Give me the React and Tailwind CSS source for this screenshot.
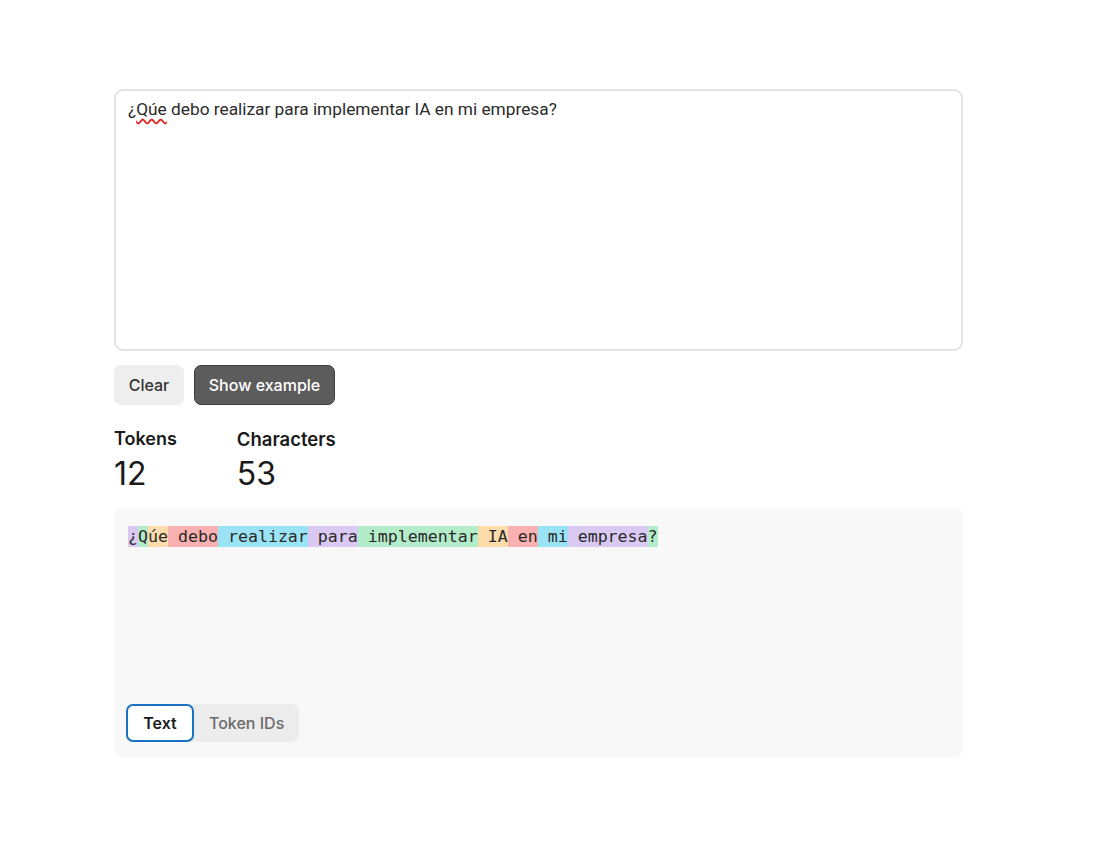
export default function App() {
  const tokens = [
    { t: "¿", c: "bg-[#d9c9f3]" },
    { t: "Q", c: "bg-[#b3ecc8]" },
    { t: "úe", c: "bg-[#fcdcab]" },
    { t: " debo", c: "bg-[#f9b1b1]" },
    { t: " realizar", c: "bg-[#9ae3f4]" },
    { t: " para", c: "bg-[#d9c9f3]" },
    { t: " implementar", c: "bg-[#b3ecc8]" },
    { t: " IA", c: "bg-[#fcdcab]" },
    { t: " en", c: "bg-[#f9b1b1]" },
    { t: " mi", c: "bg-[#9ae3f4]" },
    { t: " empresa", c: "bg-[#d9c9f3]" },
    { t: "?", c: "bg-[#b3ecc8]" },
  ];
  return (
    <div className="w-[1105px] h-[865px] bg-white pt-[89px] pl-[114px]" style={{ fontFamily: "Inter, 'Noto Sans', sans-serif" }}>
      <div className="w-[849px]">
        <div className="h-[262px] rounded-[9px] border-2 border-[#e3e3e3] px-[12px] pt-[6px]">
          <p className="text-[17.3px] text-[#2b2b2b]" style={{ fontFamily: "Roboto, sans-serif" }}>
            ¿<span className="underline decoration-wavy decoration-[#e02020] underline-offset-[3px]">Qúe</span> debo realizar para implementar IA en mi empresa?
          </p>
        </div>
        <div className="flex gap-[10px] mt-[14px]">
          <button className="h-[40px] w-[70px] rounded-[7px] bg-[#eeeeee] text-[16px] font-medium text-[#333]">Clear</button>
          <button className="h-[40px] w-[141px] rounded-[7px] bg-[#5c5c5c] border border-[#3e3e3e] text-[16px] font-medium text-white">Show example</button>
        </div>
        <div className="flex gap-[60px] mt-[23px]">
          <div>
            <div className="text-[18px] font-semibold text-[#1a1a1a] leading-[22px]">Tokens</div>
            <div className="text-[32px] text-[#1a1a1a] leading-[36px] mt-[6px]">12</div>
          </div>
          <div>
            <div className="text-[18.5px] font-semibold text-[#1a1a1a] leading-[22px]">Characters</div>
            <div className="text-[32px] text-[#1a1a1a] leading-[36px] mt-[6px]">53</div>
          </div>
        </div>
        <div className="mt-[16px] h-[249px] bg-[#f8f8f8] rounded-[8px] flex flex-col justify-between px-[12px] pt-[18px] pb-[15px]">
          <div className="flex pl-[2px] text-[16.6px] leading-[21px] text-[#2a2a2a] whitespace-pre" style={{ fontFamily: "'DejaVu Sans Mono', monospace" }}>
            {tokens.map((k, i) => (
              <span key={i} className={k.c}>{k.t}</span>
            ))}
          </div>
          <div className="flex items-center w-fit bg-[#ececec] rounded-[7px]">
            <button className="h-[38px] w-[68px] rounded-[7px] border-2 border-[#1a72c4] bg-white text-[16px] font-semibold text-[#1a1a1a]">Text</button>
            <button className="h-[38px] px-[15px] text-[16px] font-medium text-[#6b6b6b]">Token IDs</button>
          </div>
        </div>
      </div>
    </div>
  );
}
